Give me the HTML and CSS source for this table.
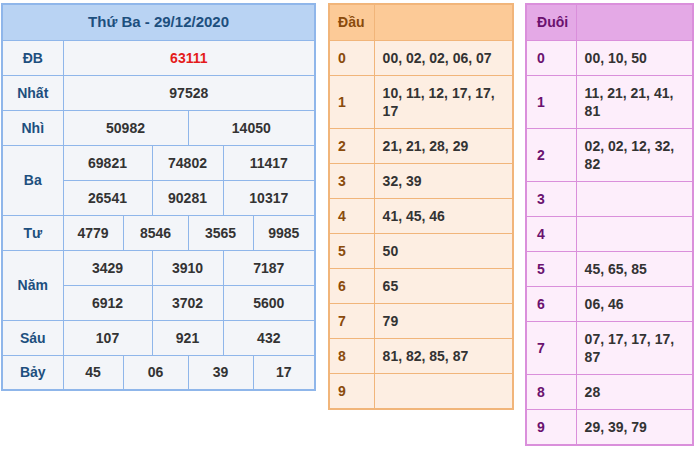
FILE: index.html
```html
<!DOCTYPE html>
<html lang="vi">
<head>
<meta charset="utf-8">
<title>XSMB 29/12/2020</title>
<link rel="stylesheet" href="styles.css">
</head>
<body>
<div class="wrap">
  <table class="kq">
    <colgroup>
      <col class="c-lbl"><col class="c1"><col class="c2"><col class="c3"><col class="c4"><col class="c5"><col class="c6">
    </colgroup>
    <thead>
      <tr><th colspan="7" class="title">Thứ Ba - 29/12/2020</th></tr>
    </thead>
    <tbody>
      <tr><td class="lbl">ĐB</td><td colspan="6" class="db">63111</td></tr>
      <tr><td class="lbl">Nhất</td><td colspan="6">97528</td></tr>
      <tr><td class="lbl">Nhì</td><td colspan="3">50982</td><td colspan="3">14050</td></tr>
      <tr><td class="lbl" rowspan="2">Ba</td><td colspan="2">69821</td><td colspan="2">74802</td><td colspan="2">11417</td></tr>
      <tr><td colspan="2">26541</td><td colspan="2">90281</td><td colspan="2">10317</td></tr>
      <tr><td class="lbl">Tư</td><td>4779</td><td colspan="2">8546</td><td colspan="2">3565</td><td>9985</td></tr>
      <tr><td class="lbl" rowspan="2">Năm</td><td colspan="2">3429</td><td colspan="2">3910</td><td colspan="2">7187</td></tr>
      <tr><td colspan="2">6912</td><td colspan="2">3702</td><td colspan="2">5600</td></tr>
      <tr><td class="lbl">Sáu</td><td colspan="2">107</td><td colspan="2">921</td><td colspan="2">432</td></tr>
      <tr><td class="lbl">Bảy</td><td>45</td><td colspan="2">06</td><td colspan="2">39</td><td>17</td></tr>
    </tbody>
  </table>

  <table class="lt dau">
    <thead><tr><th class="k">Đầu</th><th></th></tr></thead>
    <tbody>
      <tr><td class="k">0</td><td>00, 02, 02, 06, 07</td></tr>
      <tr><td class="k">1</td><td>10, 11, 12, 17, 17, 17</td></tr>
      <tr><td class="k">2</td><td>21, 21, 28, 29</td></tr>
      <tr><td class="k">3</td><td>32, 39</td></tr>
      <tr><td class="k">4</td><td>41, 45, 46</td></tr>
      <tr><td class="k">5</td><td>50</td></tr>
      <tr><td class="k">6</td><td>65</td></tr>
      <tr><td class="k">7</td><td>79</td></tr>
      <tr><td class="k">8</td><td>81, 82, 85, 87</td></tr>
      <tr><td class="k">9</td><td></td></tr>
    </tbody>
  </table>

  <table class="lt duoi">
    <thead><tr><th class="k">Đuôi</th><th></th></tr></thead>
    <tbody>
      <tr><td class="k">0</td><td>00, 10, 50</td></tr>
      <tr><td class="k">1</td><td>11, 21, 21, 41, 81</td></tr>
      <tr><td class="k">2</td><td>02, 02, 12, 32, 82</td></tr>
      <tr><td class="k">3</td><td></td></tr>
      <tr><td class="k">4</td><td></td></tr>
      <tr><td class="k">5</td><td>45, 65, 85</td></tr>
      <tr><td class="k">6</td><td>06, 46</td></tr>
      <tr><td class="k">7</td><td>07, 17, 17, 17, 87</td></tr>
      <tr><td class="k">8</td><td>28</td></tr>
      <tr><td class="k">9</td><td>29, 39, 79</td></tr>
    </tbody>
  </table>
</div>
</body>
</html>
```

FILE: styles.css
```css
* { box-sizing: border-box; }
html, body { margin: 0; padding: 0; background: #fff; }
body {
  font-family: "Liberation Sans", Arial, sans-serif;
  font-size: 14px;
  font-weight: bold;
  color: #333;
}
.wrap {
  display: flex;
  align-items: flex-start;
  padding: 3px 0 0 1px;
}
table { border-collapse: collapse; table-layout: fixed; }

/* main result table */
.kq {
  width: 315px;
  border: 2px solid #8fb6ea;
  background: #f3f5f9;
}
.kq .c-lbl { width: 61px; }
.kq .c1 { width: 60px; }
.kq .c2 { width: 29px; }
.kq .c3 { width: 36px; }
.kq .c4 { width: 35px; }
.kq .c5 { width: 30px; }
.kq .c6 { width: 62px; }
.kq th, .kq td {
  border: 1px solid #8fb6ea;
  text-align: center;
  height: 35px;
  padding: 0;
  line-height: 16px;
}
.kq .title {
  height: 36px;
  background: #b9d3f3;
  color: #1d4f7e;
  font-size: 15px;
  font-weight: bold;
}
.kq .lbl { color: #1d4f7e; }
.kq .db { color: #e41b1b; }

/* loto tables */
.lt th, .lt td {
  padding: 8px 8px;
  line-height: 18px;
  text-align: left;
  vertical-align: middle;
  height: 35px;
}
.lt thead th { height: 36px; }

.dau {
  width: 186px;
  margin-left: 12px;
  border: 2px solid #f1b57a;
  background: #fdeee2;
}
.dau th, .dau td { border: 1px solid #f1b57a; }
.dau .k { width: 45px; color: #8a4b0c; }
.dau thead th { background: #fcca97; }

.duoi {
  width: 169px;
  margin-left: 11px;
  border: 2px solid #da8fdb;
  background: #fdeefb;
}
.duoi th, .duoi td { border: 1px solid #da8fdb; }
.duoi .k { width: 50px; color: #6b126f; padding-left: 10px; }
.duoi thead th { background: #e4a9e6; }
```
